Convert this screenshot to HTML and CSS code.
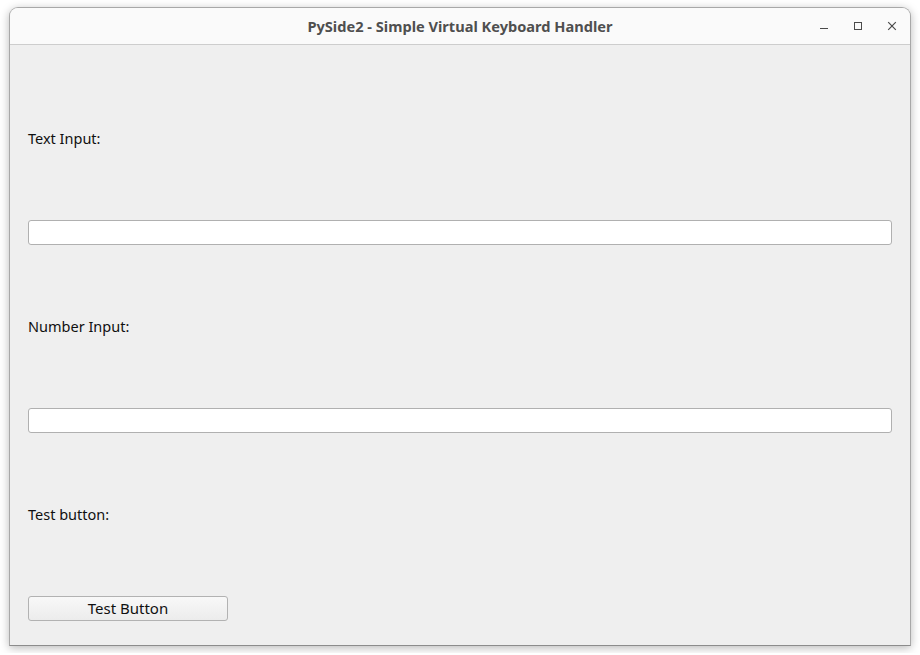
FILE: index.html
```html
<!DOCTYPE html>
<html>
<head>
<meta charset="utf-8">
<link rel="stylesheet" href="styles.css">
</head>
<body>
<div class="window">
  <div class="titlebar">
    <div class="title">PySide2 - Simple Virtual Keyboard Handler</div>
    <div class="controls">
      <svg class="ctl" width="12" height="12" viewBox="0 0 12 12"><line x1="2" y1="8.5" x2="10" y2="8.5" stroke="#4a4a4a" stroke-width="1"/></svg>
      <svg class="ctl" width="12" height="12" viewBox="0 0 12 12"><rect x="2.5" y="2.5" width="7" height="7" fill="none" stroke="#4a4a4a" stroke-width="1"/></svg>
      <svg class="ctl" width="12" height="12" viewBox="0 0 12 12"><path d="M2.2 2.2 L9.8 9.8 M9.8 2.2 L2.2 9.8" stroke="#4a4a4a" stroke-width="1.2"/></svg>
    </div>
  </div>
  <div class="content">
    <div class="label">Text Input:</div>
    <input class="field" type="text">
    <div class="label">Number Input:</div>
    <input class="field" type="text">
    <div class="label">Test button:</div>
    <button class="btn">Test Button</button>
  </div>
</div>
</body>
</html>
```
FILE: styles.css
```css
html, body {
  margin: 0;
  padding: 0;
  background: #ffffff;
}
body {
  padding: 7px 9px;
  font-family: "Noto Sans", "DejaVu Sans", sans-serif;
}
.window {
  width: 902px;
  height: 639px;
  box-sizing: border-box;
  border: 1px solid #a8a8a8;
  border-bottom-color: #8c8c8c;
  border-radius: 9px 9px 0 0;
  background: #efefef;
  box-shadow: 0 2px 10px rgba(0,0,0,0.28);
  overflow: hidden;
  display: flex;
  flex-direction: column;
}
.titlebar {
  height: 36px;
  flex: none;
  background: #fafafa;
  border-bottom: 1px solid #cdcdcd;
  position: relative;
  display: flex;
  align-items: center;
  justify-content: center;
}
.title {
  font-weight: bold;
  font-size: 14.6px;
  color: #4f4f4f;
}
.controls {
  position: absolute;
  right: 12px;
  top: 12px;
  display: flex;
  gap: 22px;
}
.ctl { display: block; }
.content {
  flex: 1;
  display: flex;
  flex-direction: column;
  align-items: flex-start;
  padding: 83px 18px 0 18px;
  gap: 71px;
}
.label {
  font-size: 14.5px;
  line-height: 21px;
  height: 21px;
  color: #101010;
}
.field {
  width: 864px;
  height: 25px;
  box-sizing: border-box;
  margin: 0;
  border: 1px solid #b0b0b0;
  border-radius: 3px;
  background: #ffffff;
  outline: none;
}
.btn {
  width: 200px;
  height: 25px;
  box-sizing: border-box;
  margin: 0;
  padding: 0 0 2px 0;
  border: 1px solid #b2b2b2;
  border-radius: 3px;
  background: linear-gradient(#f8f8f8, #ececec);
  font-family: "Noto Sans", "DejaVu Sans", sans-serif;
  font-size: 15px;
  color: #101010;
}
```
